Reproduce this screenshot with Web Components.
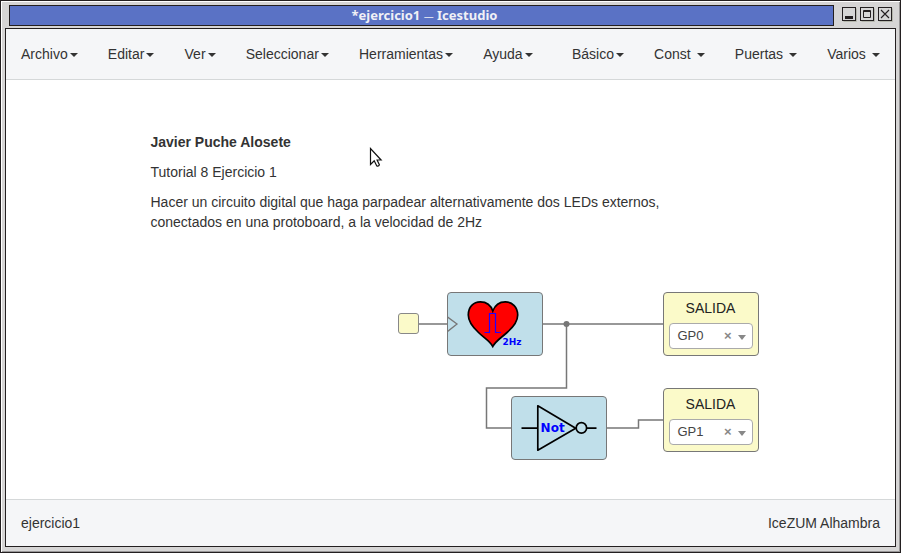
<!DOCTYPE html>
<html lang="es">
<head>
<meta charset="utf-8">
<title>Icestudio</title>
<style>
html,body{margin:0;height:100%;overflow:hidden}
body{font:14px/20px "Liberation Sans",Arial,sans-serif;color:#333}
</style>
</head>
<body>
<app-window>
  <span slot="title">*ejercicio1 <i style="font:400 10px 'DejaVu Sans',sans-serif">—</i> Icestudio</span>
  <menu-bar slot="menu">
    <menu-item>Archivo</menu-item><menu-item>Editar</menu-item><menu-item>Ver</menu-item><menu-item>Seleccionar</menu-item><menu-item>Herramientas</menu-item><menu-item>Ayuda</menu-item>
    <menu-item slot="right">Básico</menu-item><menu-item slot="right" spaced>Const</menu-item><menu-item slot="right" spaced>Puertas</menu-item><menu-item slot="right" spaced>Varios</menu-item>
  </menu-bar>
  <circuit-canvas>
    <info-note slot="note"></info-note>
    <circuit-wires></circuit-wires>
    <input-port style="left:392px;top:233px"></input-port>
    <logic-block style="left:441px;top:212px">
      <svg width="94" height="62" viewBox="448 293 94 62">
        <path d="M447.500 317L457 324l-9.500 7.500" fill="none" stroke="#777" stroke-width="1.300"/>
        <path d="M492.800 346.500C489.500 340.500 484 338 478.500 332.500C472 326.500 468.300 321.500 468.300 315C468.300 307 473.500 301.800 480.300 301.800C486.500 301.800 491 305.500 492.800 311C494.800 305.500 499.500 301.800 505.300 301.800C512.500 301.800 517.700 307.500 517.700 315C517.700 321.500 514 326.500 507 332.500C501 338 495.500 341 492.800 346.500Z" fill="#f00" stroke="#000" stroke-width="1.700"/>
        <path d="M484.500 332.500h5v-19h6v19h5.500" fill="none" stroke="#20f" stroke-width="1.200"/>
        <text x="502.500" y="345" fill="#00f" font-family="DejaVu Sans" font-weight="700" font-size="9">2Hz</text>
      </svg>
    </logic-block>
    <logic-block style="left:505px;top:316px">
      <svg width="94" height="62" viewBox="512 397 94 62">
        <path d="M521.500 428.200h16M537.800 405.800v44.400L575.700 428.200ZM587 428.200h9.500" fill="none" stroke="#000" stroke-width="1.700" stroke-linejoin="round"/>
        <circle cx="581.400" cy="427.900" r="5.200" fill="none" stroke="#000" stroke-width="1.700"/>
        <text x="540.600" y="432" fill="#00f" font-family="DejaVu Sans" font-weight="700" font-size="12">Not</text>
      </svg>
    </logic-block>
    <output-block style="left:657px;top:212px" label="SALIDA">GP0</output-block>
    <output-block style="left:657px;top:308px" label="SALIDA">GP1</output-block>
    <mouse-pointer style="left:363px;top:67px"></mouse-pointer>
  </circuit-canvas>
  <status-bar slot="status"><span>ejercicio1</span><span slot="board">IceZUM Alhambra</span></status-bar>
</app-window>

<script>
const define = (name, html) => customElements.define(name, class extends HTMLElement {
  constructor() {
    super();
    const t = document.createElement('template');
    t.innerHTML = html;
    this.attachShadow({mode: 'open'}).append(t.content.cloneNode(true));
  }
  connectedCallback() {
    const l = this.shadowRoot.querySelector('.label');
    if (l) l.textContent = this.getAttribute('label');
  }
});

define('window-buttons', `<style>
:host{display:flex;gap:3px}svg{display:block}
</style>
<svg width="15" height="15"><path d="M1.500 14.500h13v-13" stroke="#b4b6ac" fill="none"/><rect x=".5" y=".5" width="13" height="13" fill="#d6d6d6" stroke="#231f20"/><path d="M3 9h8v3H3z" fill="#231f20"/></svg>
<svg width="15" height="15"><path d="M1.500 14.500h13v-13" stroke="#b4b6ac" fill="none"/><rect x=".5" y=".5" width="13" height="13" fill="#d6d6d6" stroke="#231f20"/><path d="M3.500 3.500h7v7h-7zM3 4.500h8" fill="none" stroke="#231f20"/></svg>
<svg width="15" height="15"><path d="M1.500 14.500h13v-13" stroke="#b4b6ac" fill="none"/><rect x=".5" y=".5" width="13" height="13" fill="#d6d6d6" stroke="#231f20"/><path d="M3 3l8 8M11 3l-8 8" fill="none" stroke="#231f20" stroke-width="1.100"/></svg>`);

define('app-window', `<style>
:host{display:grid;grid-template-rows:22px 519px;row-gap:1px;box-sizing:border-box;width:901px;height:553px;padding:4px 5px 5px 4px;background:#d6d5d5;border:1px solid #231f20;box-shadow:inset 1px 1px #fff,inset -1px -1px #989697}
header{display:flex;align-items:flex-start;padding:0 3px 0 4px}
.title{box-sizing:border-box;width:825px;height:21px;border:1px solid #231f20;background:#5a72c5;color:#f0f0f6;text-align:center;font:700 13px/19px "Noto Sans",sans-serif;padding-left:6px;white-space:pre}
window-buttons{margin:2px 0 0 8px}
main{box-sizing:border-box;display:grid;grid-template-rows:51px 419px 47px;border:1px solid #231f20;height:519px;background:#fff}
</style>
<header><div class="title"><slot name="title"></slot></div><window-buttons></window-buttons></header>
<main><slot name="menu"></slot><slot></slot><slot name="status"></slot></main>`);

define('menu-bar', `<style>
:host{display:flex;justify-content:space-between;background:#f5f6f8;border-bottom:1px solid #d5d8d9}
nav{display:flex}
</style><nav><slot></slot></nav><nav><slot name="right"></slot></nav>`);

define('menu-item', `<style>
:host{display:block;padding:15px 15.150px 15px 15px;line-height:20px;white-space:nowrap}
i{display:inline-block;vertical-align:middle;margin-left:2px;border-top:4px solid;border-left:4px solid transparent;border-right:4px solid transparent}
:host([spaced]) i{margin-left:6px}
</style><slot></slot><i></i>`);

define('status-bar', `<style>
:host{display:flex;justify-content:space-between;padding:13px 15px 0;background:#f5f6f8;border-top:1px solid #d5d8d9}
</style><slot></slot><slot name="board"></slot>`);

define('circuit-canvas', `<style>
:host{display:block;position:relative;background:#fff;overflow:hidden}
::slotted(*:not([slot])){position:absolute}
</style><slot name="note"></slot><slot></slot>`);

define('info-note', `<style>
:host{display:block;padding:52px 0 0 144.500px;width:530px}
p{margin:0 0 10px}
</style><p><b>Javier Puche Alosete</b></p><p>Tutorial 8 Ejercicio 1</p><p>Hacer un circuito digital que haga parpadear alternativamente dos LEDs externos,<br>conectados en una protoboard, a la velocidad de 2Hz</p>`);

define('circuit-wires', `<style>
:host{left:0;top:0}svg{display:block}
</style><svg width="889" height="419" viewBox="6 80 889 419"><g fill="none" stroke="#777" stroke-width="1.500"><path d="M419 324h28M543 324h120M566.500 324v64h-80v40h25M607 428h31.500v-8H663"/></g><circle cx="566.500" cy="324" r="3" fill="#777"/></svg>`);

define('input-port', `<style>
:host{box-sizing:border-box;width:21px;height:21px;border:1px solid #888;border-radius:3px;background:#fbfac9}
</style>`);

define('logic-block', `<style>
:host{box-sizing:border-box;width:96px;height:64px;border:1px solid #777;border-radius:4px;background:#c0dfea}
</style><slot></slot>`);

define('output-block', `<style>
:host{box-sizing:border-box;width:96px;height:64px;border:1px solid #777;border-radius:4px;background:#fbfac9;padding:5px}
.label{text-align:center;color:#222;height:20px;margin-bottom:5px;padding-right:1px}
.select{display:flex;align-items:center;box-sizing:border-box;height:26px;border:1px solid #aaa;border-radius:4px;background:#fff;padding:0 6px 0 7.500px;font-size:13px;line-height:24px;color:#444}
.clear{margin-left:auto;font-weight:700;color:#888}
i{border-top:5px solid #888;border-left:4px solid transparent;border-right:4px solid transparent;margin:3px 0 0 6.500px}
</style><div class="label"></div><div class="select"><slot></slot><span class="clear">×</span><i></i></div>`);

define('mouse-pointer', `<style>:host{display:block}svg{display:block}</style>
<svg width="15" height="22" viewBox="0 0 15 22"><path d="M1.500 1.500v16l3.700-3.700 2.600 5.200q2 .6 2.600-1.200l-2.300-4.800h4Z" fill="#fff" stroke="#111" stroke-width="1.200"/></svg>`);
</script>
</body>
</html>
